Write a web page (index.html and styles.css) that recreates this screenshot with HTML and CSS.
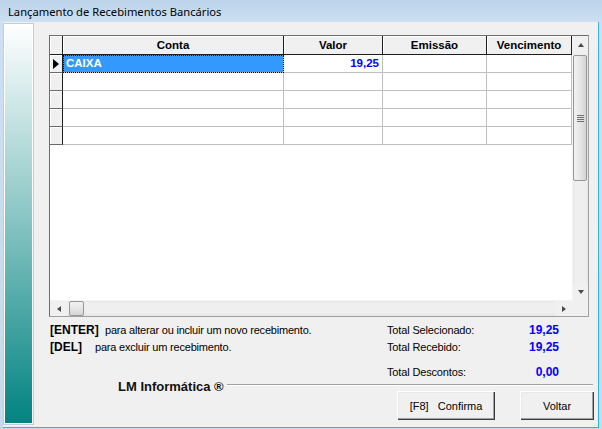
FILE: index.html
```html
<!DOCTYPE html>
<html lang="pt">
<head>
<meta charset="utf-8">
<title>Lançamento de Recebimentos Bancários</title>
<link rel="stylesheet" href="styles.css">
</head>
<body>
<div class="window">
  <div class="titlebar"><span class="title">Lançamento de Recebimentos Bancários</span></div>
  <div class="client">
    <div class="sidepanel"></div>
    <div class="main">
      <div class="dbgrid">
        <div class="cells">
          <div class="hcell ind"></div>
          <div class="hcell">Conta</div>
          <div class="hcell">Valor</div>
          <div class="hcell">Emissão</div>
          <div class="hcell">Vencimento</div>

          <div class="icell"><span class="row-arrow"></span></div>
          <div class="dcell selected">CAIXA</div>
          <div class="dcell num">19,25</div>
          <div class="dcell"></div>
          <div class="dcell"></div>

          <div class="icell"></div><div class="dcell"></div><div class="dcell"></div><div class="dcell"></div><div class="dcell"></div>
          <div class="icell"></div><div class="dcell"></div><div class="dcell"></div><div class="dcell"></div><div class="dcell"></div>
          <div class="icell"></div><div class="dcell"></div><div class="dcell"></div><div class="dcell"></div><div class="dcell"></div>
          <div class="icell"></div><div class="dcell"></div><div class="dcell"></div><div class="dcell"></div><div class="dcell"></div>
        </div>
        <div class="vscroll">
          <div class="sbtn"><span class="tri-up"></span></div>
          <div class="vtrack">
            <div class="vthumb"><span class="grip"></span></div>
          </div>
          <div class="sbtn"><span class="tri-down"></span></div>
        </div>
        <div class="hscroll">
          <div class="sbtn-h"><span class="tri-left"></span></div>
          <div class="htrack"><div class="hthumb"></div></div>
          <div class="sbtn-h"><span class="tri-right"></span></div>
        </div>
        <div class="corner"></div>
      </div>

      <div class="info">
        <div class="notes">
          <div class="note"><span class="key key-enter">[ENTER]</span><span class="desc">para alterar ou incluir um novo recebimento.</span></div>
          <div class="note"><span class="key key-del">[DEL]</span><span class="desc">para excluir um recebimento.</span></div>
        </div>
        <div class="totals">
          <div class="trow"><span class="tlabel">Total Selecionado:</span><span class="tval">19,25</span></div>
          <div class="trow"><span class="tlabel">Total Recebido:</span><span class="tval">19,25</span></div>
          <div class="trow trow-gap"><span class="tlabel">Total Descontos:</span><span class="tval">0,00</span></div>
        </div>
      </div>

      <div class="footer">
        <div class="brand-row"><span class="brand">LM Informática ®</span><span class="rule"></span></div>
        <div class="buttons">
          <button class="btn btn-confirm">[F8]&nbsp;&nbsp; Confirma</button>
          <button class="btn btn-back">Voltar</button>
        </div>
      </div>
    </div>
  </div>
</div>
</body>
</html>
```
FILE: styles.css
```css
html, body {
  margin: 0;
  padding: 0;
  background: #f0f0f0;
}

.window {
  width: 602px;
  height: 429px;
  box-sizing: border-box;
  padding: 0 3px 1px 3px;
  display: flex;
  flex-direction: column;
  background: linear-gradient(to bottom, #bcd3eb 0, #cddff1 22px, #c6daee 100%);
  overflow: hidden;
}

.titlebar {
  height: 22px;
  flex: 0 0 22px;
  display: flex;
  align-items: center;
  padding-left: 5px;
}

.title {
  font-family: "Noto Sans", "DejaVu Sans", sans-serif;
  font-size: 11.2px;
  color: #000;
  line-height: 16px;
  margin-top: 1px;
}

.client {
  flex: 1;
  display: flex;
  background: #f0f0f0;
  border-right: 1px solid #35b0e4;
  border-bottom: 1px solid #35b0e4;
  min-height: 0;
}

.sidepanel {
  width: 31px;
  flex: 0 0 31px;
  box-sizing: border-box;
  margin: 1px 0 2px 0;
  border: 1px solid #c2cfdb;
  box-shadow: inset 0 0 0 1px #ffffff;
  background: linear-gradient(to bottom, #ffffff 0%, #8ac6c4 48%, #018381 100%);
}

.main {
  flex: 1;
  display: flex;
  flex-direction: column;
  padding-top: 13px;
  padding-left: 15px;
  min-width: 0;
}

/* ---------- DB grid ---------- */
.dbgrid {
  width: 540px;
  height: 282px;
  box-sizing: border-box;
  border: 1px solid #a0a0a0;
  border-left-color: #6d6d6d;
  border-top-color: #6d6d6d;
  display: grid;
  grid-template-columns: 522px 16px;
  grid-template-rows: 264px 16px;
  background: #ffffff;
}

.cells {
  display: grid;
  grid-template-columns: 13px 221px 99px 104px 85px;
  grid-template-rows: 19px;
  grid-auto-rows: 18px;
  align-content: start;
  background: #ffffff;
  font-family: "Liberation Sans", Arial, sans-serif;
  font-size: 11.5px;
  font-weight: bold;
}

.hcell {
  box-sizing: border-box;
  background: #f0f0f0;
  border-right: 1px solid #1e1e1e;
  border-bottom: 1px solid #1e1e1e;
  box-shadow: inset 1px 1px #ffffff;
  text-align: center;
  line-height: 16px;
  padding-top: 1px;
  color: #000;
  white-space: nowrap;
  overflow: hidden;
}

.icell {
  box-sizing: border-box;
  background: #f0f0f0;
  border-right: 1px solid #1e1e1e;
  border-bottom: 1px solid #6a6a6a;
  box-shadow: inset 1px 1px #ffffff;
  display: flex;
  align-items: center;
  padding-left: 3px;
}

.row-arrow {
  width: 0;
  height: 0;
  border-left: 6px solid #000;
  border-top: 5px solid transparent;
  border-bottom: 5px solid transparent;
}

.dcell {
  box-sizing: border-box;
  border-right: 1px solid #c0c0c0;
  border-bottom: 1px solid #c0c0c0;
  line-height: 17px;
  padding: 0 3px;
  white-space: nowrap;
  overflow: hidden;
  color: #000;
}

.dcell.selected {
  background: #3399ff;
  color: #ffffff;
  outline: 1px dotted #000;
  outline-offset: -1px;
}

.dcell.num {
  text-align: right;
  color: #0000ff;
}

/* ---------- scrollbars ---------- */
.vscroll {
  display: flex;
  flex-direction: column;
  background: #eaeaea;
  border-left: 1px solid #f4f4f4;
  box-sizing: border-box;
}

.sbtn {
  height: 17px;
  flex: 0 0 17px;
  display: flex;
  align-items: center;
  justify-content: center;
  background: #f0f0f0;
}

.vtrack {
  flex: 1;
  padding-top: 2px;
  box-sizing: border-box;
  background: linear-gradient(to right, #e6e6e6 0, #efefef 2px, #efefef 13px, #e4e4e4 100%);
}

.vthumb {
  height: 126px;
  margin: 0 1px 0 0;
  box-sizing: border-box;
  border: 1px solid #979797;
  border-radius: 2px;
  background: linear-gradient(to right, #f2f2f2 0%, #e6e6e6 50%, #d4d4d4 100%);
  display: flex;
  align-items: center;
  justify-content: center;
}

.grip {
  width: 7px;
  height: 7px;
  background: repeating-linear-gradient(to bottom, #6f6f6f 0, #6f6f6f 1px, transparent 1px, transparent 2px);
}

.tri-up {
  width: 0; height: 0;
  border-bottom: 4px solid #4a4a4a;
  border-left: 3.5px solid transparent;
  border-right: 3.5px solid transparent;
}

.tri-down {
  width: 0; height: 0;
  border-top: 4px solid #4a4a4a;
  border-left: 3.5px solid transparent;
  border-right: 3.5px solid transparent;
}

.hscroll {
  display: flex;
  background: #eaeaea;
  border-top: 1px solid #f4f4f4;
  box-sizing: border-box;
}

.sbtn-h {
  width: 17px;
  flex: 0 0 17px;
  display: flex;
  align-items: center;
  justify-content: center;
  background: #f0f0f0;
}

.htrack {
  flex: 1;
  padding-left: 2px;
  background: linear-gradient(to bottom, #e6e6e6 0, #efefef 2px, #efefef 12px, #e4e4e4 100%);
}

.hthumb {
  width: 15px;
  height: 15px;
  box-sizing: border-box;
  border: 1px solid #979797;
  border-radius: 2px;
  background: linear-gradient(to bottom, #f2f2f2 0%, #e6e6e6 50%, #d4d4d4 100%);
}

.tri-left {
  width: 0; height: 0;
  border-right: 4px solid #4a4a4a;
  border-top: 3.5px solid transparent;
  border-bottom: 3.5px solid transparent;
}

.tri-right {
  width: 0; height: 0;
  border-left: 4px solid #4a4a4a;
  border-top: 3.5px solid transparent;
  border-bottom: 3.5px solid transparent;
}

.corner {
  background: #f0f0f0;
}

/* ---------- info ---------- */
.info {
  display: flex;
  margin-top: 5px;
}

.notes {
  width: 337px;
  margin-left: 1px;
  flex: 0 0 337px;
}

.note {
  display: flex;
  height: 17px;
  line-height: 17px;
  white-space: nowrap;
}

.key {
  font-family: "Liberation Sans", Arial, sans-serif;
  font-size: 12px;
  font-weight: bold;
  color: #000;
}

.key-enter { width: 55px; flex: 0 0 55px; }
.key-del { width: 45px; flex: 0 0 45px; }

.desc {
  font-family: "Liberation Sans", Arial, sans-serif;
  font-size: 11px;
  letter-spacing: -0.2px;
  color: #000;
}

.totals {
  width: 172px;
  flex: 0 0 172px;
}

.trow {
  display: flex;
  justify-content: space-between;
  height: 17px;
  line-height: 17px;
}

.trow-gap {
  margin-top: 8px;
  height: 16px;
}

.tlabel {
  font-family: "Liberation Sans", Arial, sans-serif;
  font-size: 11px;
  letter-spacing: -0.15px;
  color: #000;
}

.tval {
  font-family: "Liberation Sans", Arial, sans-serif;
  font-size: 12px;
  font-weight: bold;
  color: #0000ff;
}

/* ---------- footer ---------- */
.footer {
  display: flex;
  flex-direction: column;
}

.brand-row {
  display: flex;
  align-items: flex-start;
  height: 11px;
  padding-left: 69px;
  padding-right: 5px;
}

.brand {
  font-family: "Liberation Sans", Arial, sans-serif;
  font-size: 13px;
  font-weight: bold;
  line-height: 11px;
  margin-top: 1px;
  color: #111;
  white-space: nowrap;
}

.rule {
  flex: 1;
  margin-left: 3px;
  margin-top: 4px;
  height: 0;
  border-top: 1px solid #a0a0a0;
  border-bottom: 1px solid #ffffff;
}

.buttons {
  display: flex;
  justify-content: flex-end;
  gap: 25px;
  padding-right: 4px;
}

.btn {
  height: 29px;
  box-sizing: border-box;
  margin: 0;
  padding: 0;
  border: none;
  background: #f0f0f0;
  box-shadow: inset 1px 1px #ffffff, inset -1px -1px #3c3c3c, inset -2px -2px #a0a0a0, inset 2px 2px #e8e8e8;
  font-family: "Liberation Sans", Arial, sans-serif;
  font-size: 11px;
  color: #000;
}

.btn-confirm { width: 98px; }
.btn-back { width: 74px; }
```
